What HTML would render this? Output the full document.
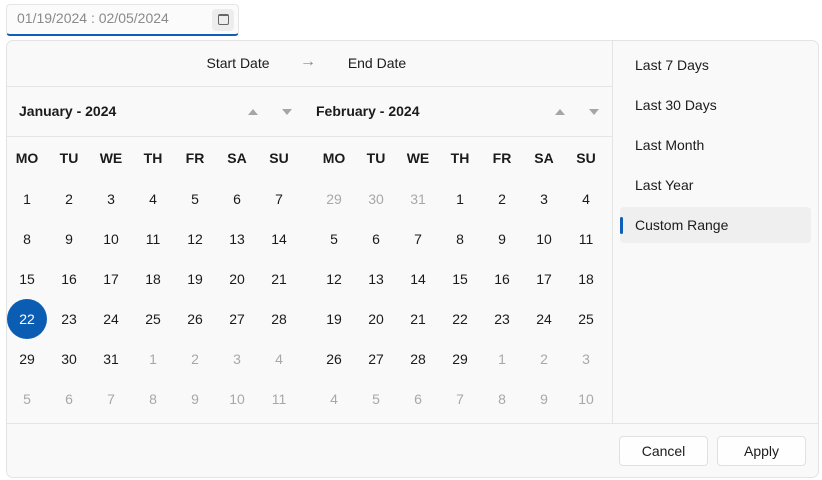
<!DOCTYPE html>
<html><head><style>
*{box-sizing:border-box;margin:0;padding:0}
body{width:822px;height:480px;background:#fff;font-family:"Segoe UI","Liberation Sans",sans-serif;color:#1b1b1b;position:relative;overflow:hidden;font-size:14px}
.a{position:absolute}
.input{left:6px;top:4px;width:233px;height:32px;border:1px solid #e5e5e5;border-bottom:2px solid #0f5fb8;border-radius:4px;background:#fbfbfb}
.pop{left:6px;top:40px;width:813px;height:438px;border:1px solid #e3e3e3;border-radius:7px;background:#f9f9f9}
.c{position:absolute;transform:translate(-50%,-50%);white-space:nowrap}
.g{color:#a8a8a8}
.b{font-weight:bold}
.hl{position:absolute;height:1px;background:#e5e5e5}
.btn{position:absolute;top:436px;height:30px;border:1px solid #e0e0e0;border-radius:4px;background:#fefefe;text-align:center;line-height:28px;font-size:14px}
.up{position:absolute;width:0;height:0;border-left:5px solid transparent;border-right:5px solid transparent;border-bottom:6px solid #a6a6a6}
.dn{position:absolute;width:0;height:0;border-left:5px solid transparent;border-right:5px solid transparent;border-top:6px solid #a6a6a6}
</style></head><body>
<div class="a input"></div>
<div class="a" style="left:17px;top:10px;color:#8a8a8a;font-size:14px">01/19/2024 : 02/05/2024</div>
<div class="a" style="left:212px;top:9px;width:22px;height:22px;background:#ededed;border-radius:4px"></div>
<div class="a" style="left:218px;top:14px;width:11px;height:11px;border:1px solid #666;border-radius:2px;border-top-width:2px"></div>
<div class="a pop"></div>
<div class="hl" style="left:7px;top:86px;width:605px"></div>
<div class="hl" style="left:7px;top:136px;width:605px"></div>
<div class="hl" style="left:7px;top:423px;width:811px"></div>
<div class="a" style="left:612px;top:41px;width:1px;height:382px;background:#e5e5e5"></div>
<div class="c" style="left:238px;top:63px">Start Date</div>
<div class="c" style="left:308px;top:62px;color:#888;font-size:16px">→</div>
<div class="c" style="left:377px;top:63px">End Date</div>
<div class="a b" style="left:19px;top:103px">January - 2024</div>
<div class="a b" style="left:316px;top:103px">February - 2024</div>
<div class="up" style="left:248px;top:109px"></div>
<div class="dn" style="left:282px;top:109px"></div>
<div class="up" style="left:555px;top:109px"></div>
<div class="dn" style="left:589px;top:109px"></div>
<div class="a" style="left:7px;top:299px;width:40px;height:40px;border-radius:50%;background:#0b5cb3"></div>
<div id="cal"></div>
<div class="a" style="left:620px;top:207px;width:191px;height:36px;background:#efefef;border-radius:4px"></div>
<div class="a" style="left:620px;top:217px;width:3px;height:17px;background:#0f5fb8;border-radius:2px"></div>
<div class="a" style="left:635px;top:57px">Last 7 Days</div>
<div class="a" style="left:635px;top:97px">Last 30 Days</div>
<div class="a" style="left:635px;top:137px">Last Month</div>
<div class="a" style="left:635px;top:177px">Last Year</div>
<div class="a" style="left:635px;top:217px">Custom Range</div>
<div class="btn" style="left:619px;width:89px">Cancel</div>
<div class="btn" style="left:717px;width:89px">Apply</div>
<script>
var h='',d=['MO','TU','WE','TH','FR','SA','SU'];
function cal(x0,days){for(var i=0;i<7;i++)h+='<div class="c b" style="left:'+(x0+42*i)+'px;top:158px">'+d[i]+'</div>';
days.forEach(function(v,k){var r=Math.floor(k/7),c=k%7;var cls=v[1]?'c g':'c';var st=(v[2])?'color:#fff;':'';h+='<div class="'+cls+'" style="'+st+'left:'+(x0+42*c)+'px;top:'+(199+40*r)+'px">'+v[0]+'</div>';});}
var j=[];for(var i=1;i<=31;i++)j.push([i,0,i==22]);for(i=1;i<=11;i++)j.push([i,1]);
var f=[[29,1],[30,1],[31,1]];for(i=1;i<=29;i++)f.push([i,0]);for(i=1;i<=10;i++)f.push([i,1]);
cal(27,j);cal(334,f);document.getElementById('cal').innerHTML=h;
</script>
</body></html>
